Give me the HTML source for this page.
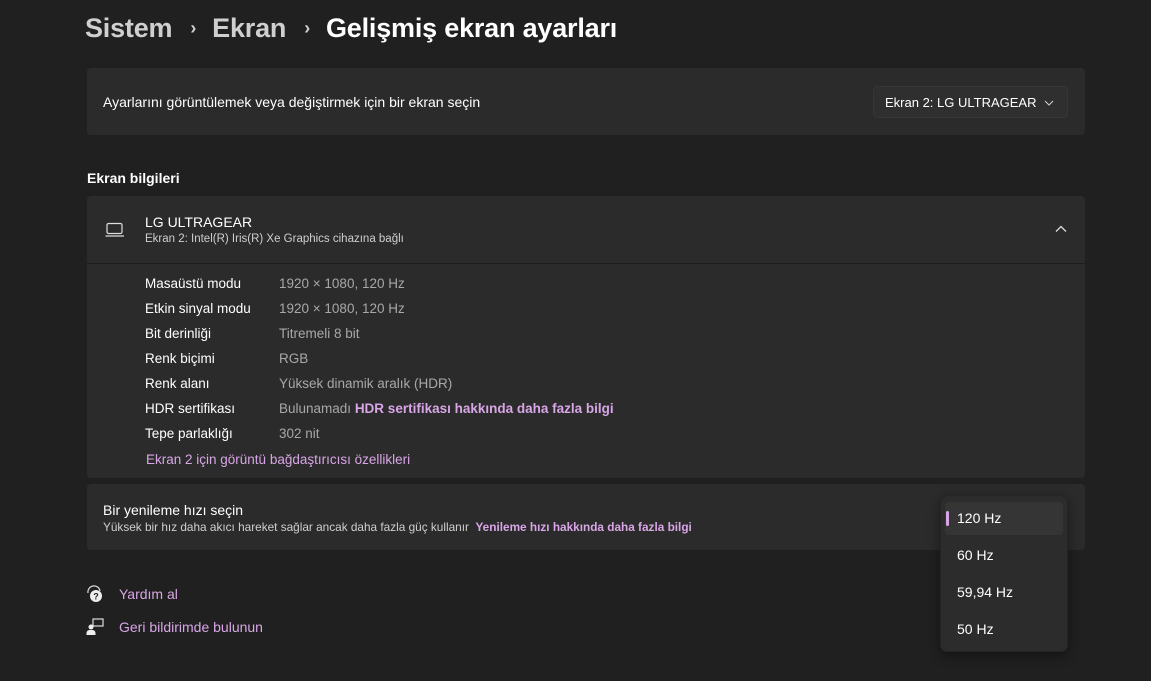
<!DOCTYPE html>
<html><head><meta charset="utf-8"><style>
*{margin:0;padding:0;box-sizing:border-box}
body{width:1151px;height:681px;background:#202020;font-family:"Segoe UI","Liberation Sans",sans-serif;color:#fff;position:relative;overflow:hidden;font-size:14px}
.abs{position:absolute}
.card{position:absolute;left:87px;width:998px;background:#2b2b2b;border-radius:4px}
.row{position:absolute;left:145px;font-size:13.5px;color:#fff}
.val{position:absolute;left:279px;font-size:13.5px;color:#a8a8a8}
.link{color:#d8a6e6}
</style></head><body>
<div class="abs" style="left:85px;top:13px;font-size:27px;font-weight:600;color:#cfcfcf;white-space:nowrap;letter-spacing:-0.2px">Sistem<span style="font-size:18px;margin:0 16px 0 18px;position:relative;top:-3px">&#x203A;</span>Ekran<span style="font-size:18px;margin:0 16px 0 18px;position:relative;top:-3px">&#x203A;</span><span style="color:#fff">Gelişmiş ekran ayarları</span></div>

<div class="card" style="top:68px;height:67px"></div>
<div class="abs" style="left:103px;top:94px;font-size:14px">Ayarlarını görüntülemek veya değiştirmek için bir ekran seçin</div>
<div class="abs" style="left:873px;top:86px;width:195px;height:32px;background:#2f2f2f;border:1px solid #363636;border-radius:4px;font-size:13px;padding:8px 0 0 11px;white-space:nowrap">Ekran 2: LG ULTRAGEAR<svg style="position:absolute;right:13px;top:13px" width="10" height="6"><path d="M1 1L5 5L9 1" fill="none" stroke="#ccc" stroke-width="1.1"/></svg></div>

<div class="abs" style="left:87px;top:170px;font-size:14px;font-weight:600">Ekran bilgileri</div>

<div class="card" style="top:196px;height:282px"></div>
<div class="abs" style="left:87px;top:263px;width:998px;height:1px;background:#1d1d1d"></div>
<svg class="abs" style="left:105px;top:222px" width="20" height="16" viewBox="0 0 20 16"><rect x="2" y="1.5" width="15" height="10" rx="1.5" fill="none" stroke="#ddd" stroke-width="1.2"/><line x1="0.5" y1="14" x2="19" y2="14" stroke="#ddd" stroke-width="1.2"/></svg>
<div class="abs" style="left:145px;top:214px;font-size:14px">LG ULTRAGEAR</div>
<div class="abs" style="left:145px;top:233px;font-size:11.5px;color:#cfcfcf">Ekran 2: Intel(R) Iris(R) Xe Graphics cihazına bağlı</div>
<svg class="abs" style="left:1055px;top:225px" width="12" height="8"><path d="M1 6.5L6 1.5L11 6.5" fill="none" stroke="#ddd" stroke-width="1.3"/></svg>

<div class="row" style="top:276px">Masaüstü modu</div><div class="val" style="top:276px">1920 × 1080, 120 Hz</div>
<div class="row" style="top:301px">Etkin sinyal modu</div><div class="val" style="top:301px">1920 × 1080, 120 Hz</div>
<div class="row" style="top:326px">Bit derinliği</div><div class="val" style="top:326px">Titremeli 8 bit</div>
<div class="row" style="top:351px">Renk biçimi</div><div class="val" style="top:351px">RGB</div>
<div class="row" style="top:376px">Renk alanı</div><div class="val" style="top:376px">Yüksek dinamik aralık (HDR)</div>
<div class="row" style="top:401px">HDR sertifikası</div><div class="val" style="top:401px">Bulunamadı <span class="link" style="font-weight:600">HDR sertifikası hakkında daha fazla bilgi</span></div>
<div class="row" style="top:426px">Tepe parlaklığı</div><div class="val" style="top:426px">302 nit</div>
<div class="row link" style="top:452px;left:146px">Ekran 2 için görüntü bağdaştırıcısı özellikleri</div>

<div class="card" style="top:484px;height:66px"></div>
<div class="abs" style="left:103px;top:502px;font-size:14px">Bir yenileme hızı seçin</div>
<div class="abs" style="left:103px;top:520px;font-size:11.8px;color:#cfcfcf">Yüksek bir hız daha akıcı hareket sağlar ancak daha fazla güç kullanır &nbsp;<span class="link" style="font-weight:600">Yenileme hızı hakkında daha fazla bilgi</span></div>

<div class="abs" style="left:940px;top:495px;width:128px;height:157px;background:#2c2c2c;border:1px solid #252525;border-radius:7px;box-shadow:0 4px 12px rgba(0,0,0,.4)"></div>
<div class="abs" style="left:945px;top:502px;width:118px;height:33px;background:#353535;border-radius:4px"></div>
<div class="abs" style="left:946px;top:511px;width:3px;height:15px;background:#d8a6e6;border-radius:2px"></div>
<div class="abs" style="left:957px;top:510px;font-size:14px">120 Hz</div>
<div class="abs" style="left:957px;top:547px;font-size:14px">60 Hz</div>
<div class="abs" style="left:957px;top:584px;font-size:14px">59,94 Hz</div>
<div class="abs" style="left:957px;top:621px;font-size:14px">50 Hz</div>

<svg class="abs" style="left:86px;top:585px" width="18" height="18" viewBox="0 0 18 18"><path d="M2 8A6 6 0 0 1 14 6" fill="none" stroke="#ddd" stroke-width="1.2"/><circle cx="10" cy="11" r="6" fill="#eee"/><text x="10" y="14.5" font-size="9" text-anchor="middle" fill="#222" font-family="Liberation Sans" font-weight="bold">?</text></svg>
<div class="abs link" style="left:119px;top:586px;font-size:14px">Yardım al</div>
<svg class="abs" style="left:86px;top:618px" width="18" height="18" viewBox="0 0 18 18"><rect x="7" y="1" width="10" height="7" fill="none" stroke="#ddd" stroke-width="1.2"/><circle cx="5" cy="9" r="2.5" fill="#eee"/><path d="M0.5 17v-2a3 3 0 0 1 3-3h3a3 3 0 0 1 3 3v2z" fill="#eee"/></svg>
<div class="abs link" style="left:119px;top:619px;font-size:14px">Geri bildirimde bulunun</div>
</body></html>
